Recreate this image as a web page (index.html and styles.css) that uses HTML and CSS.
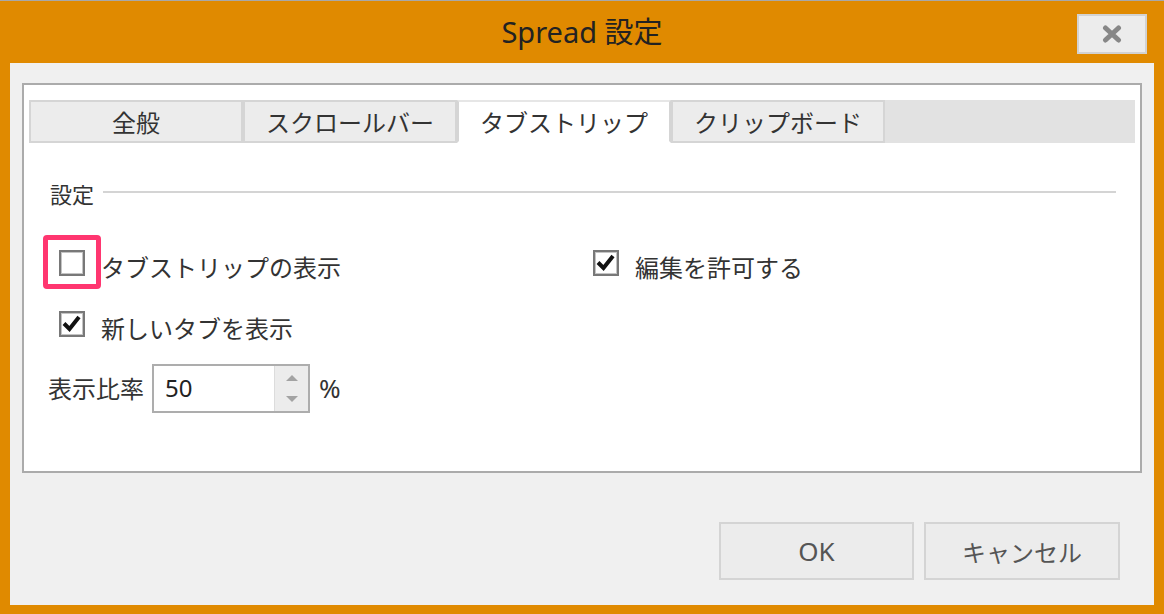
FILE: index.html
```html
<!DOCTYPE html>
<html lang="ja">
<head>
<meta charset="utf-8">
<title>Spread 設定</title>
<link rel="stylesheet" href="styles.css">
</head>
<body>
<div class="window">
  <div class="titlebar">
    <div class="title-spacer"></div>
    <div class="title">Spread 設定</div>
    <button class="close" type="button" aria-label="閉じる">
      <svg width="20" height="18" viewBox="0 0 20 18"><path d="M3.5 3 L16.5 15 M16.5 3 L3.5 15" stroke="#878787" stroke-width="5" stroke-linecap="round" fill="none"/></svg>
    </button>
  </div>
  <div class="client">
    <div class="panel">
      <div class="tabs">
        <div class="tab">全般</div>
        <div class="tab">スクロールバー</div>
        <div class="tab active">タブストリップ</div>
        <div class="tab">クリップボード</div>
      </div>
      <div class="content">
        <div class="section">
          <span class="section-label">設定</span>
          <div class="rule"></div>
        </div>
        <div class="row row1">
          <div class="col-left">
            <label class="opt indent">
              <span class="box">
                <span class="highlight"></span>
              </span>
              <span class="lbl">タブストリップの表示</span>
            </label>
          </div>
          <label class="opt">
            <span class="box checked">
              <svg width="22" height="22" viewBox="0 0 22 22"><path d="M3 10.5 L8.5 16 L18 4" stroke="#111" stroke-width="4" fill="none"/></svg>
            </span>
            <span class="lbl">編集を許可する</span>
          </label>
        </div>
        <div class="row row2">
          <label class="opt indent">
            <span class="box checked">
              <svg width="22" height="22" viewBox="0 0 22 22"><path d="M3 10.5 L8.5 16 L18 4" stroke="#111" stroke-width="4" fill="none"/></svg>
            </span>
            <span class="lbl">新しいタブを表示</span>
          </label>
        </div>
        <div class="row row3">
          <span class="ratio-label">表示比率</span>
          <div class="spinner">
            <span class="spin-value">50</span>
            <div class="spin-buttons">
              <span class="arrow up"></span>
              <span class="arrow down"></span>
            </div>
          </div>
          <span class="pct">%</span>
        </div>
      </div>
    </div>
    <div class="footer">
      <button class="btn ok" type="button">OK</button>
      <button class="btn" type="button">キャンセル</button>
    </div>
  </div>
</div>
</body>
</html>
```

FILE: styles.css
```css
html, body {
  margin: 0;
  padding: 0;
}
body {
  font-family: "Noto Sans", "Noto Sans CJK JP", sans-serif;
  color: #333;
  background: #e08a00;
}
.window {
  width: 1164px;
  height: 614px;
  box-sizing: border-box;
  border-top: 1px solid #a8a8a8;
  background: #e08a00;
  display: flex;
  flex-direction: column;
}
.titlebar {
  height: 62px;
  flex: none;
  display: grid;
  grid-template-columns: 1fr auto 1fr;
  align-items: center;
  padding-right: 17px;
  padding-left: 17px;
}
.title {
  font-size: 29px;
  line-height: 36px;
  color: #222;
  font-family: "Noto Sans", "Noto Sans CJK JP", sans-serif;
}
.close {
  justify-self: end;
  align-self: start;
  margin-top: 13px;
  width: 70px;
  height: 40px;
  box-sizing: border-box;
  background: #ececec;
  border: 2px solid #d2d2d2;
  padding: 0;
  display: flex;
  align-items: center;
  justify-content: center;
}
.client {
  margin: 0 10px;
  height: 542px;
  flex: none;
  background: #f0f0f0;
  box-sizing: border-box;
  padding: 20px 12px 0;
}
.panel {
  height: 390px;
  box-sizing: border-box;
  border: 2px solid #ababab;
  background: #fff;
  padding: 15px 5px 0;
}
.tabs {
  height: 43px;
  display: flex;
  background: #e2e2e2;
}
.tab {
  width: 214px;
  box-sizing: border-box;
  border: 2px solid #d5d5d5;
  background: #ececec;
  font-family: "Noto Sans CJK JP", sans-serif;
  font-size: 24px;
  line-height: 39px;
  text-align: center;
  color: #333;
}
.tab.active {
  background: #fff;
  border-bottom-color: #fff;
  border-top-color: #e6e6e6;
}
.content {
  padding: 0 19px 0 21px;
}
.section {
  margin-top: 34px;
  display: flex;
  align-items: center;
  height: 32px;
}
.section-label {
  font-family: "Noto Sans CJK JP", sans-serif;
  font-size: 22px;
  line-height: 32px;
}
.rule {
  flex: 1;
  height: 2px;
  background: #d4d4d4;
  margin-left: 9px;
  margin-top: -3px;
}
.row {
  height: 50px;
  display: flex;
  align-items: center;
}
.row1 { margin-top: 29px; }
.row2 { margin-top: 11px; }
.row3 { margin-top: 14px; }
.col-left {
  width: 543px;
  flex: none;
  display: flex;
  align-items: center;
}
.opt {
  display: flex;
  align-items: center;
  font-family: "Noto Sans CJK JP", sans-serif;
  font-size: 24px;
  line-height: 32px;
}
.opt.indent {
  margin-left: 9px;
}
.box {
  position: relative;
  width: 26px;
  height: 26px;
  box-sizing: border-box;
  border: 2px solid #787878;
  box-shadow: inset 0 0 0 1px #c4c4c4;
  background: #fff;
  display: flex;
  align-items: center;
  justify-content: center;
}
.highlight {
  position: absolute;
  left: -18px;
  top: -17px;
  width: 58px;
  height: 54px;
  box-sizing: border-box;
  border: 5px solid #ff3670;
  border-radius: 4px;
}
.lbl {
  margin-left: 16px;
  padding-top: 8px;
  color: #333;
}
.ratio-label {
  font-family: "Noto Sans CJK JP", sans-serif;
  font-size: 24px;
  line-height: 32px;
  margin-left: -2px;
}
.spinner {
  margin-left: 8px;
  width: 158px;
  height: 49px;
  box-sizing: border-box;
  border: 2px solid #adadad;
  display: flex;
  background: #fff;
}
.spin-value {
  flex: 1;
  padding-left: 11px;
  font-size: 24px;
  line-height: 44px;
  color: #222;
}
.spin-buttons {
  width: 34px;
  box-sizing: border-box;
  border-left: 1px solid #dcdcdc;
  background: #ececec;
  display: flex;
  flex-direction: column;
  align-items: center;
  justify-content: center;
  gap: 15px;
}
.arrow {
  width: 0;
  height: 0;
  border-left: 6px solid transparent;
  border-right: 6px solid transparent;
}
.arrow.up {
  border-bottom: 6px solid #a3a3a3;
}
.arrow.down {
  border-top: 6px solid #a3a3a3;
}
.pct {
  margin-left: 9px;
  font-size: 26px;
  line-height: 32px;
  color: #333;
}
.footer {
  margin-top: 49px;
  display: flex;
  justify-content: flex-end;
  gap: 10px;
  padding-right: 22px;
}
.btn {
  width: 196px;
  height: 58px;
  box-sizing: border-box;
  background: #ececec;
  border: 2px solid #d4d4d4;
  font-family: "Noto Sans", "Noto Sans CJK JP", sans-serif;
  font-size: 24px;
  color: #555;
  padding: 0;
}
.btn.ok {
  width: 195px;
  font-size: 26px;
}
```
